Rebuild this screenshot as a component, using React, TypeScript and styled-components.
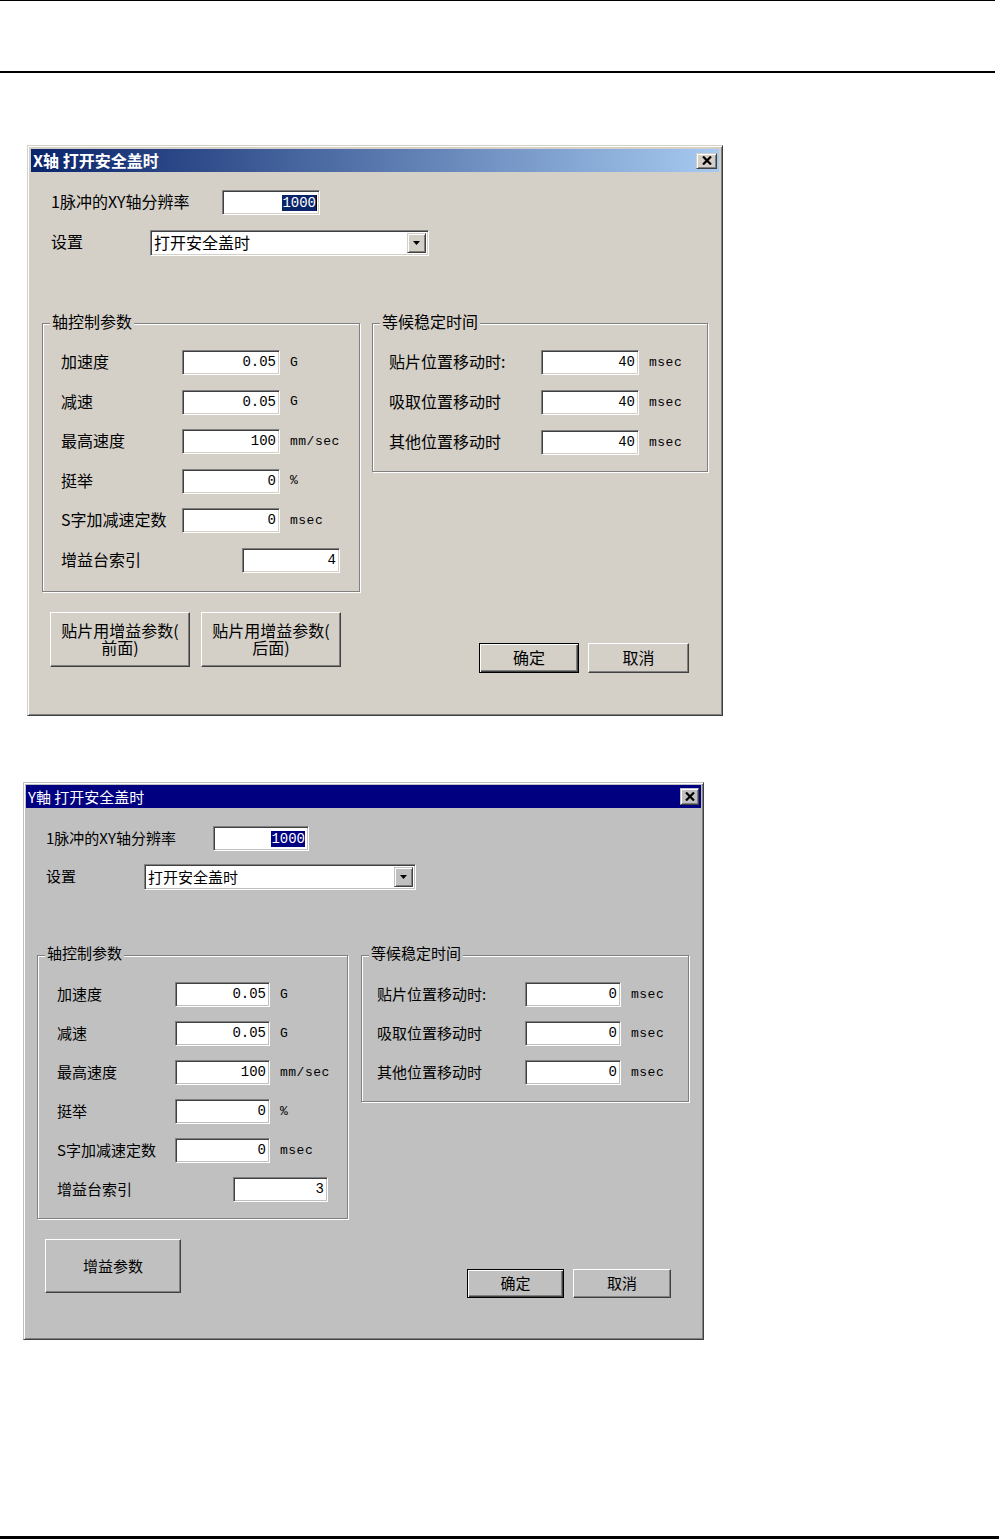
import React from "react";
import styled, { createGlobalStyle } from "styled-components";

const GlobalStyle = createGlobalStyle`
    html, body {
        margin: 0;
        padding: 0;
        background: #fff;
    }
    body {
        font-family: "Noto Sans CJK SC", "Liberation Sans", sans-serif;
        color: #000;
    }
`;

const mono = `"Liberation Mono", "DejaVu Sans Mono", monospace`;

type Row = { label: string; value: string; unit?: string; wide?: boolean };

type GroupSpec = {
    legend: string;
    w: number;
    h: number;
    padLeft: number;
    labelW: number;
    wideLabelW: number;
    inputW: number;
    gap: number;
    rows: Row[];
};

type Spec = {
    title: string;
    bold: boolean;
    titleBg: string;
    titleFont: number;
    width: number;
    height: number;
    pad: number;
    top: number;
    left: number;
    bg: string;
    sel: string;
    caret: boolean;
    font: number;
    closeW: number;
    closeH: number;
    resLabelW: number;
    resW: number;
    selLabelW: number;
    selW: number;
    selGap: number;
    groupsTop: number;
    groupsGap: number;
    axis: GroupSpec;
    wait: GroupSpec;
    bigButtons: string[][];
    bigW: number;
    bigH: number;
    okTop: number;
    okW: number;
    okH: number;
};

const Page = styled.div`
    width: 999px;
    min-height: 1539px;
    display: flex;
    flex-direction: column;
`;

const Header = styled.div`
    width: 995px;
    height: 70px;
    border-top: 1px solid #000;
    border-bottom: 2px solid #000;
`;

const Footer = styled.div`
    margin-top: auto;
    width: 999px;
    border-top: 3px solid #000;
`;

const Window = styled.div<{ $w: number; $h: number; $pad: number; $top: number; $left: number; $bg: string; $font: number }>`
    box-sizing: border-box;
    width: ${(p) => p.$w}px;
    height: ${(p) => p.$h}px;
    margin: ${(p) => p.$top}px 0 0 ${(p) => p.$left}px;
    padding: ${(p) => p.$pad}px;
    background: ${(p) => p.$bg};
    border: 1px solid;
    border-color: ${(p) => p.$bg} #404040 #404040 ${(p) => p.$bg};
    box-shadow: inset 1px 1px 0 #fff, inset -1px -1px 0 #808080;
    display: flex;
    flex-direction: column;
    font-size: ${(p) => p.$font}px;
    line-height: 1.2;
    flex-shrink: 0;
`;

const TitleBar = styled.div<{ $bg: string; $bold: boolean; $font: number }>`
    height: 23px;
    flex-shrink: 0;
    background: ${(p) => p.$bg};
    color: #fff;
    display: flex;
    align-items: center;
    justify-content: space-between;
    padding: 0 2px 0 2px;
    font-size: ${(p) => p.$font}px;
    font-weight: ${(p) => (p.$bold ? 700 : 400)};
    white-space: nowrap;
`;

const Raised = styled.div<{ $bg: string }>`
    box-sizing: border-box;
    background: ${(p) => p.$bg};
    border: 1px solid;
    border-color: ${(p) => p.$bg} #404040 #404040 ${(p) => p.$bg};
    box-shadow: inset 1px 1px 0 #fff, inset -1px -1px 0 #808080;
    display: flex;
    align-items: center;
    justify-content: center;
`;

const CloseButton = styled(Raised)<{ $w: number; $h: number }>`
    width: ${(p) => p.$w}px;
    height: ${(p) => p.$h}px;
`;

const FormRow = styled.div<{ $mt: number }>`
    display: flex;
    align-items: center;
    padding-left: 20px;
    margin-top: ${(p) => p.$mt}px;
`;

const Label = styled.span<{ $w: number }>`
    width: ${(p) => p.$w}px;
    flex-shrink: 0;
    white-space: nowrap;
    padding-bottom: 2px;
`;

const Sunken = styled.div<{ $w: number; $h: number; $bg: string }>`
    box-sizing: border-box;
    width: ${(p) => p.$w}px;
    height: ${(p) => p.$h}px;
    flex-shrink: 0;
    background: #fff;
    border: 1px solid;
    border-color: #808080 #fff #fff #808080;
    box-shadow: inset 1px 1px 0 #404040, inset -1px -1px 0 ${(p) => p.$bg};
    padding: 2px;
    display: flex;
    align-items: center;
`;

const NumberField = styled(Sunken)`
    justify-content: flex-end;
    padding-right: 3px;
    font-family: ${mono};
    font-size: 14px;
`;

const Selected = styled.span<{ $sel: string; $caret: boolean }>`
    background: ${(p) => p.$sel};
    color: #fff;
    line-height: 16px;
    box-shadow: ${(p) => (p.$caret ? "1px 0 0 #000" : "none")};
`;

const SelectText = styled.span`
    flex: 1;
    padding-left: 1px;
    padding-bottom: 1px;
    white-space: nowrap;
`;

const DropButton = styled(Raised)`
    width: 19px;
    align-self: stretch;
`;

const Groups = styled.div<{ $mt: number; $gap: number }>`
    display: flex;
    align-items: flex-start;
    gap: ${(p) => p.$gap}px;
    padding-left: 11px;
    margin-top: ${(p) => p.$mt}px;
`;

const GroupBox = styled.div<{ $w: number; $h: number; $pl: number; $gap: number }>`
    position: relative;
    box-sizing: border-box;
    width: ${(p) => p.$w}px;
    height: ${(p) => p.$h}px;
    border: 1px solid #808080;
    box-shadow: inset 1px 1px 0 #fff, 1px 1px 0 #fff;
    padding: 26px 0 0 ${(p) => p.$pl}px;
    display: flex;
    flex-direction: column;
    gap: ${(p) => p.$gap}px;
`;

const Legend = styled.span<{ $bg: string }>`
    position: absolute;
    top: -12px;
    left: 7px;
    padding: 0 2px;
    line-height: 18px;
    background: ${(p) => p.$bg};
    white-space: nowrap;
`;

const GroupRow = styled.div`
    display: flex;
    align-items: center;
    height: 25px;
`;

const Unit = styled.span`
    margin-left: 10px;
    font-family: ${mono};
    font-size: 13px;
    letter-spacing: 0.5px;
    white-space: nowrap;
`;

const Bottom = styled.div`
    display: flex;
    align-items: flex-start;
    margin-top: 20px;
    padding: 0 30px 0 19px;
`;

const BigButtons = styled.div`
    display: flex;
    gap: 11px;
`;

const PushButton = styled.div<{ $w: number; $h: number; $bg: string; $default?: boolean }>`
    box-sizing: border-box;
    width: ${(p) => p.$w}px;
    height: ${(p) => p.$h}px;
    background: ${(p) => p.$bg};
    border: 1px solid;
    border-color: ${(p) => (p.$default ? "#000" : "#fff #404040 #404040 #fff")};
    box-shadow: ${(p) =>
        p.$default
            ? "inset 1px 1px 0 #fff, inset -1px -1px 0 #404040, inset -2px -2px 0 #808080"
            : "inset -1px -1px 0 #808080"};
    display: flex;
    align-items: center;
    justify-content: center;
    text-align: center;
    line-height: 17px;
    padding-bottom: 2px;
    white-space: nowrap;
`;

const Actions = styled.div<{ $mt: number }>`
    margin-left: auto;
    margin-top: ${(p) => p.$mt}px;
    display: flex;
    gap: 9px;
`;

function CloseIcon() {
    return (
        <svg width="10" height="9" viewBox="0 0 10 9">
            <path d="M1 0.5 L9 8.5 M9 0.5 L1 8.5" stroke="#000" strokeWidth="2.2" fill="none" />
        </svg>
    );
}

function DownArrow() {
    return (
        <svg width="7" height="4" viewBox="0 0 7 4">
            <polygon points="0,0 7,0 3.5,4" fill="#000" />
        </svg>
    );
}

function Group({ spec, bg }: { spec: GroupSpec; bg: string }) {
    return (
        <GroupBox $w={spec.w} $h={spec.h} $pl={spec.padLeft} $gap={spec.gap}>
            <Legend $bg={bg}>{spec.legend}</Legend>
            {spec.rows.map((r) => (
                <GroupRow key={r.label}>
                    <Label $w={r.wide ? spec.wideLabelW : spec.labelW}>{r.label}</Label>
                    <NumberField $w={spec.inputW} $h={25} $bg={bg}>{r.value}</NumberField>
                    {r.unit && <Unit>{r.unit}</Unit>}
                </GroupRow>
            ))}
        </GroupBox>
    );
}

function Dialog({ s }: { s: Spec }) {
    return (
        <Window $w={s.width} $h={s.height} $pad={s.pad} $top={s.top} $left={s.left} $bg={s.bg} $font={s.font}>
            <TitleBar $bg={s.titleBg} $bold={s.bold} $font={s.titleFont}>
                <span>{s.title}</span>
                <CloseButton $bg={s.bg} $w={s.closeW} $h={s.closeH}>
                    <CloseIcon />
                </CloseButton>
            </TitleBar>
            <FormRow $mt={18}>
                <Label $w={s.resLabelW}>1脉冲的XY轴分辨率</Label>
                <NumberField $w={s.resW} $h={25} $bg={s.bg}>
                    <Selected $sel={s.sel} $caret={s.caret}>1000</Selected>
                </NumberField>
            </FormRow>
            <FormRow $mt={s.selGap}>
                <Label $w={s.selLabelW}>设置</Label>
                <Sunken $w={s.selW} $h={26} $bg={s.bg}>
                    <SelectText>打开安全盖时</SelectText>
                    <DropButton $bg={s.bg}>
                        <DownArrow />
                    </DropButton>
                </Sunken>
            </FormRow>
            <Groups $mt={s.groupsTop} $gap={s.groupsGap}>
                <Group spec={s.axis} bg={s.bg} />
                <Group spec={s.wait} bg={s.bg} />
            </Groups>
            <Bottom>
                <BigButtons>
                    {s.bigButtons.map((lines) => (
                        <PushButton key={lines.join("")} $w={s.bigW} $h={s.bigH} $bg={s.bg}>
                            <span>
                                {lines.map((l, i) => (
                                    <React.Fragment key={l}>
                                        {i > 0 && <br />}
                                        {l}
                                    </React.Fragment>
                                ))}
                            </span>
                        </PushButton>
                    ))}
                </BigButtons>
                <Actions $mt={s.okTop}>
                    <PushButton $w={s.okW} $h={s.okH} $bg={s.bg} $default>确定</PushButton>
                    <PushButton $w={s.okW + 1} $h={s.okH} $bg={s.bg}>取消</PushButton>
                </Actions>
            </Bottom>
        </Window>
    );
}

const axisRows = (value: string): Row[] => [
    { label: "加速度", value: "0.05", unit: "G" },
    { label: "减速", value: "0.05", unit: "G" },
    { label: "最高速度", value: "100", unit: "mm/sec" },
    { label: "挺举", value: "0", unit: "%" },
    { label: "S字加减速定数", value: "0", unit: "msec" },
    { label: "增益台索引", value, wide: true },
];

const waitRows = (value: string): Row[] => [
    { label: "贴片位置移动时:", value, unit: "msec" },
    { label: "吸取位置移动时", value, unit: "msec" },
    { label: "其他位置移动时", value, unit: "msec" },
];

const xDialog: Spec = {
    title: "X轴 打开安全盖时",
    bold: true,
    titleBg: "linear-gradient(to right, #0a246a, #a6caf0)",
    titleFont: 16,
    width: 696,
    height: 571,
    pad: 3,
    top: 72,
    left: 27,
    bg: "#d4d0c8",
    sel: "#0a246a",
    caret: true,
    font: 16,
    closeW: 21,
    closeH: 16,
    resLabelW: 171,
    resW: 98,
    selLabelW: 99,
    selW: 279,
    selGap: 15,
    groupsTop: 67,
    groupsGap: 12,
    axis: {
        legend: "轴控制参数",
        w: 318,
        h: 269,
        padLeft: 18,
        labelW: 121,
        wideLabelW: 181,
        inputW: 98,
        gap: 14.6,
        rows: axisRows("4"),
    },
    wait: {
        legend: "等候稳定时间",
        w: 336,
        h: 149,
        padLeft: 16,
        labelW: 152,
        wideLabelW: 152,
        inputW: 98,
        gap: 15,
        rows: waitRows("40"),
    },
    bigButtons: [
        ["贴片用增益参数(", "前面)"],
        ["贴片用增益参数(", "后面)"],
    ],
    bigW: 140,
    bigH: 55,
    okTop: 31,
    okW: 100,
    okH: 30,
};

const yDialog: Spec = {
    title: "Y軸 打开安全盖时",
    bold: false,
    titleBg: "#000080",
    titleFont: 15,
    width: 681,
    height: 558,
    pad: 2,
    top: 66,
    left: 23,
    bg: "#c0c0c0",
    sel: "#000080",
    caret: false,
    font: 15,
    closeW: 19,
    closeH: 17,
    resLabelW: 167,
    resW: 96,
    selLabelW: 98,
    selW: 272,
    selGap: 13,
    groupsTop: 65,
    groupsGap: 13,
    axis: {
        legend: "轴控制参数",
        w: 311,
        h: 264,
        padLeft: 19,
        labelW: 118,
        wideLabelW: 176,
        inputW: 95,
        gap: 14,
        rows: axisRows("3"),
    },
    wait: {
        legend: "等候稳定时间",
        w: 328,
        h: 147,
        padLeft: 15,
        labelW: 148,
        wideLabelW: 148,
        inputW: 96,
        gap: 14,
        rows: waitRows("0"),
    },
    bigButtons: [["增益参数"]],
    bigW: 136,
    bigH: 54,
    okTop: 30,
    okW: 97,
    okH: 29,
};

export default function App() {
    return (
        <Page>
            <GlobalStyle />
            <Header />
            <Dialog s={xDialog} />
            <Dialog s={yDialog} />
            <Footer />
        </Page>
    );
}
